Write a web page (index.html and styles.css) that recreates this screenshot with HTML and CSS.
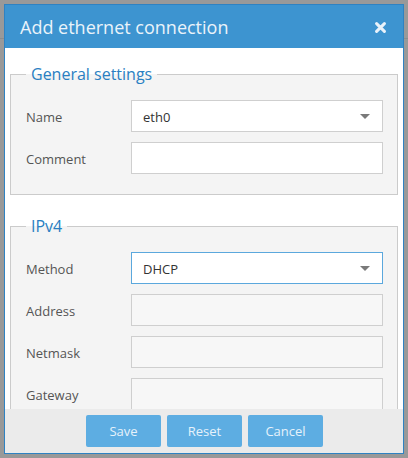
FILE: index.html
```html
<!DOCTYPE html>
<html>
<head>
<meta charset="utf-8">
<link rel="stylesheet" href="styles.css">
</head>
<body>
<div class="dialog">
  <div class="header">
    <span class="title">Add ethernet connection</span>
    <span class="close"><svg width="11" height="11" viewBox="0 0 11 11"><path d="M1.6 1.6 L9.4 9.4 M9.4 1.6 L1.6 9.4" stroke="#e9f2fa" stroke-width="3" stroke-linecap="round"/></svg></span>
  </div>
  <div class="body">
    <fieldset class="group">
      <legend>General settings</legend>
      <div class="row"><label class="lbl">Name</label><div class="field"><span>eth0</span><i class="caret"></i></div></div>
      <div class="row"><label class="lbl">Comment</label><div class="field"></div></div>
    </fieldset>
    <fieldset class="group second">
      <legend>IPv4</legend>
      <div class="row"><label class="lbl">Method</label><div class="field focus"><span>DHCP</span><i class="caret"></i></div></div>
      <div class="row"><label class="lbl">Address</label><div class="field disabled"></div></div>
      <div class="row"><label class="lbl">Netmask</label><div class="field disabled"></div></div>
      <div class="row"><label class="lbl">Gateway</label><div class="field disabled"></div></div>
    </fieldset>
  </div>
  <div class="footer">
    <button class="btn">Save</button>
    <button class="btn">Reset</button>
    <button class="btn">Cancel</button>
  </div>
</div>
</body>
</html>
```

FILE: styles.css
```css
html, body {
  margin: 0;
  padding: 0;
}
body {
  background: linear-gradient(to bottom, #999 0, #999 38px, #8c8c8c 38px, #8c8c8c 39px, #999 39px) #999;
  font-family: "Open Sans", "DejaVu Sans", sans-serif;
  width: 408px;
  height: 458px;
  overflow: hidden;
}
.dialog {
  position: relative;
  margin: 4px 0 0 4px;
  width: 400px;
  height: 450px;
  box-sizing: border-box;
  border: 1px solid #2f82c2;
  background: #fff;
  display: flex;
  flex-direction: column;
}
.header {
  height: 43px;
  flex: none;
  background: #3d94d0;
  display: flex;
  align-items: center;
  justify-content: space-between;
  padding: 0 17px 0 15px;
}
.title {
  color: #eaf3fa;
  font-size: 18px;
  line-height: 24px;
  margin-top: 1px;
}
.close {
  display: flex;
  width: 11px;
  height: 11px;
  margin-top: 1px;
}
.body {
  flex: 1;
  overflow: hidden;
  padding: 15px 5px 0;
}
.group {
  margin: 0;
  border: 1px solid #cbcbcb;
  background: #f4f4f4;
  padding: 15px 14px 20px 15px;
  min-width: 0;
}
.group.second {
  margin-top: 20px;
}
.group legend {
  font-size: 16px;
  line-height: 22px;
  color: #2a7fc2;
  padding: 0 5px;
}
.row {
  display: flex;
  align-items: center;
  height: 32px;
}
.row + .row {
  margin-top: 10px;
}
.lbl {
  width: 105px;
  flex: none;
  font-size: 13px;
  color: #555;
  padding-top: 2px;
}
.field {
  flex: 1;
  height: 32px;
  box-sizing: border-box;
  border: 1px solid #cfcfcf;
  background: #fff;
  display: flex;
  align-items: center;
  padding: 2px 12px 0 11px;
  font-size: 13px;
  color: #333;
}
.field.focus {
  border-color: #5ba8dd;
}
.field.disabled {
  background: #f7f7f7;
}
.caret {
  margin-left: auto;
  width: 0;
  height: 0;
  border-left: 5px solid transparent;
  border-right: 5px solid transparent;
  border-top: 5px solid #7a7a7a;
  margin-top: -1px;
}
.footer {
  flex: none;
  height: 44px;
  background: #ebebeb;
  display: flex;
  align-items: center;
  justify-content: center;
  gap: 6px;
  padding-left: 1px;
}
.btn {
  width: 75px;
  height: 32px;
  border: none;
  border-radius: 2px;
  background: #5dade2;
  color: #e6f2fb;
  font-family: "Open Sans", "DejaVu Sans", sans-serif;
  font-size: 13px;
  padding: 0;
}
```
